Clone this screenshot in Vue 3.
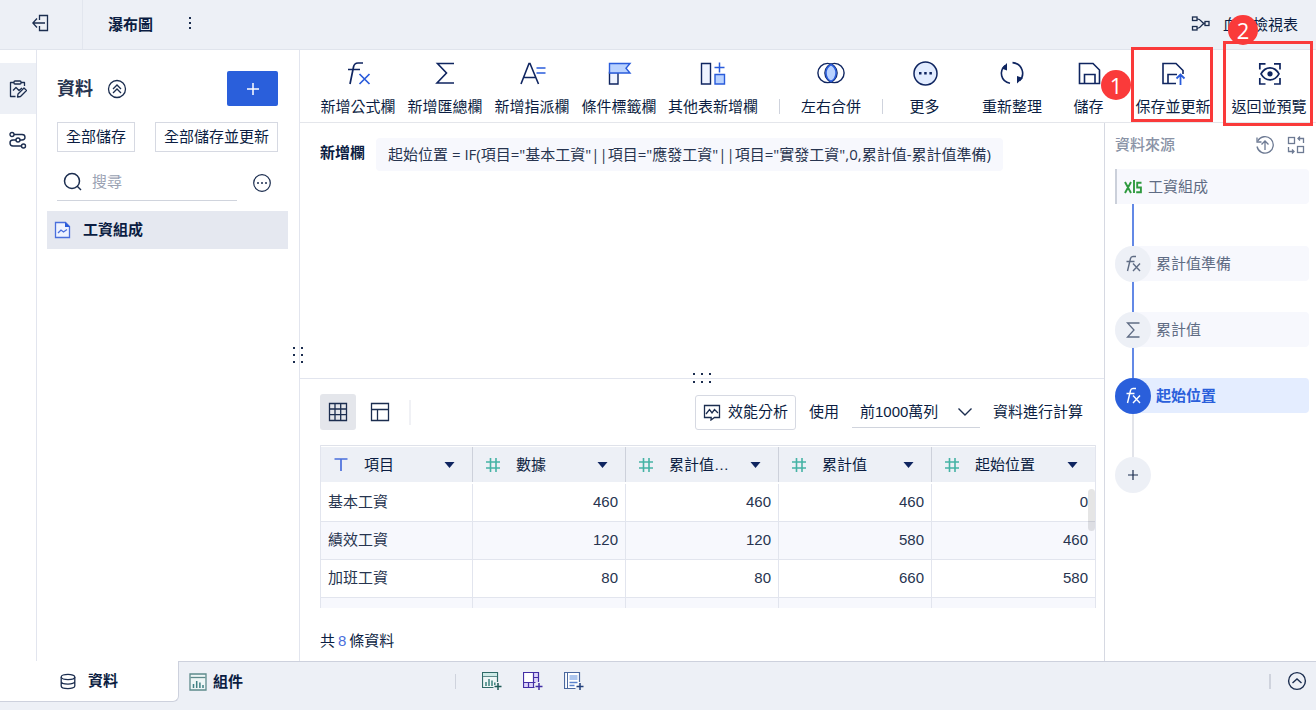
<script setup>
import { h, ref } from 'vue'

const N = '#0f2560'
const B = '#2a5cdb'
const D = '#1b2d4f'

const icons = {
  exit: `<g fill="none" stroke="${D}" stroke-width="1.3"><path d="M7.500 6V1.500h8v15h-8V12"/><path d="M13 9H1M5 4.500.8 9 5 13.500"/></g>`,
  dots: `<g fill="${D}"><rect x="3" y="2" width="2" height="2"/><rect x="3" y="7" width="2" height="2"/><rect x="3" y="12" width="2" height="2"/></g>`,
  lineage: `<g fill="none" stroke="${D}" stroke-width="1.3"><rect x="1.500" y="1" width="4.500" height="3.500"/><rect x="1.500" y="10.500" width="4.500" height="3.500"/><rect x="14" y="5.500" width="4" height="4"/><path d="M6 2.800c5 0 3.500 4.700 8 4.700M6 12.300c5 0 3.500-4.800 8-4.800"/></g>`,
  edit: `<g fill="none" stroke="${D}" stroke-width="1.3" stroke-linejoin="round"><path d="M5 2.500H1.500v14h5M12 2.500h3.500V6"/><rect x="5" y="1" width="7" height="3" rx="1"/><path d="M4 10.500l3-3 3 3 3-2.500"/><path d="M9 14l6-6 2.500 2.500-6 6L8.500 17z"/></g>`,
  flow: `<g fill="none" stroke="${D}" stroke-width="1.4"><circle cx="3" cy="3.500" r="2"/><circle cx="9" cy="9" r="2"/><circle cx="14.500" cy="15" r="2"/><path d="M5 3.500h8c4 0 4 5.500 0 5.500h-2M7 9H4c-4 0-4 6 0 6h8.500"/></g>`,
  collapse: `<g fill="none" stroke="${D}" stroke-width="1.3"><circle cx="10" cy="10" r="8.500"/><path d="M6 10l4-4 4 4M6 14l4-4 4 4"/></g>`,
  plus: `<path d="M8 2v12M2 8h12" fill="none" stroke="currentColor" stroke-width="1.500"/>`,
  plusSmall: `<path d="M8 3v10M3 8h10" fill="none" stroke="${D}" stroke-width="1.200"/>`,
  search: `<g fill="none" stroke="${D}" stroke-width="1.500"><circle cx="9" cy="9" r="7.500"/><path d="M14 14l4 4"/></g>`,
  ellipsis: `<circle cx="10" cy="10" r="8.300" fill="none" stroke="${D}" stroke-width="1.200"/><g fill="${D}"><circle cx="6" cy="10" r="1"/><circle cx="10" cy="10" r="1"/><circle cx="14" cy="10" r="1"/></g>`,
  file: `<path d="M1.500 1.500h10l4 4v11h-14z" fill="#eef3ff" stroke="#4a6fdc" stroke-width="1.300"/><path d="M11 1v5h5z" fill="${B}"/><path d="M4 12l3-3 2.500 2L13 8.500" fill="none" stroke="#4a6fdc" stroke-width="1.300"/>`,
  fx: `<path d="M6 25l3.500-17q.800-4 4.500-4h5M4 10.500h12" fill="none" stroke="${N}" stroke-width="1.700"/><path d="M15.500 15l10 10M25.500 15l-10 10" fill="none" stroke="${B}" stroke-width="1.700"/>`,
  sigma: `<path d="M23 4.500H6.500l9 9.500-9.500 10H23" fill="none" stroke="${N}" stroke-width="1.600"/>`,
  assign: `<path d="M3 25L11 4.500h1L20.500 25M6 18.500h12" fill="none" stroke="${N}" stroke-width="1.600"/><path d="M18.500 9h9M18.500 14h9" fill="none" stroke="${B}" stroke-width="1.600"/>`,
  flag: `<path d="M4.500 13.500h8.500V25H4.500z" fill="#eef3ff" stroke="${N}" stroke-width="1.400"/><path d="M4.500 4.500h20.500l-4 4.800 4 4.700H4.500z" fill="#b9d2ff" stroke="${B}" stroke-width="1.400"/>`,
  addTable: `<path d="M2.500 4.500h9v20.500h-9z" fill="#eef3ff" stroke="${N}" stroke-width="1.400"/><path d="M16 15.500h9.500V25H16z" fill="#b9d2ff" stroke="${B}" stroke-width="1.400"/><path d="M20.500 3.500v10M15.500 8.500h10" stroke="${B}" stroke-width="1.500"/>`,
  merge: `<path d="M14 5.500a9.700 9.700 0 0 1 0 17 9.700 9.700 0 0 1 0-17z" fill="#b9d2ff"/><g fill="none" stroke="${N}" stroke-width="1.400"><circle cx="10.500" cy="14" r="9.600"/><circle cx="17.500" cy="14" r="9.600"/></g><path d="M14 5.500a9.700 9.700 0 0 1 0 17 9.700 9.700 0 0 1 0-17z" fill="none" stroke="${B}" stroke-width="1.500"/>`,
  more: `<circle cx="14.500" cy="14.500" r="11.500" fill="#e2ecff" stroke="${N}" stroke-width="1.500"/><g fill="${N}"><rect x="8" y="13" width="2.500" height="2.500"/><rect x="13.200" y="13" width="2.500" height="2.500"/><rect x="18.400" y="13" width="2.500" height="2.500"/></g>`,
  refresh: `<g fill="none" stroke="${N}" stroke-width="1.600"><path d="M12 24.300C2.500 22.500 1 12 7 6.500"/><path d="M14.500 3.600c10 .9 13 12.400 7 18"/></g><path d="M9 4v7.500L3.500 9.500zM19 17v7.500l6-5.500z" fill="${N}"/>`,
  save: `<path d="M4.500 4.500H18l6.500 6.500v13.500h-20zM9.500 24.500v-9H20v9" fill="none" stroke="${N}" stroke-width="1.600"/>`,
  saveUpdate: `<path d="M17 24.500H4v-20h13l7 7V15M9 24.500v-9h9" fill="none" stroke="${N}" stroke-width="1.600"/><path d="M21.500 26V16M17.500 19.500l4-4 4 4" fill="none" stroke="${B}" stroke-width="1.800"/>`,
  preview: `<g fill="none" stroke="${N}" stroke-width="1.700"><path d="M4.800 10.500V4.800h5.700M19 4.800h6v5.700M25 19v6h-6M10.500 25H4.800v-6"/><path d="M6 14.900c4.500-8 13.500-8 18 0-4.500 8-13.500 8-18 0z"/></g><circle cx="15" cy="14.800" r="2.600" fill="${N}"/>`,
  grid: `<path d="M1.500 1.500h17v17h-17zM1.500 7h17M1.500 12.700h17M7 1.500v17M12.700 1.500v17" fill="none" stroke="${D}" stroke-width="1.300"/>`,
  layout: `<path d="M1.500 1.500h17v17h-17zM1.500 7.500h17M7.500 7.500v11" fill="none" stroke="${D}" stroke-width="1.300"/>`,
  perf: `<path d="M1.500 2.500h15v12h-5L8 17l.2-2.500H1.500z" fill="none" stroke="${D}" stroke-width="1.300"/><path d="M3 11l3.500-4.500L9 10l2.500-3.500L15 10" fill="none" stroke="${D}" stroke-width="1.300"/>`,
  chevron: `<path d="M1.500 1.500L8 8l6.500-6.500" fill="none" stroke="${D}" stroke-width="1.400"/>`,
  text: `<path d="M1.500 2h13M8 2v12" fill="none" stroke="#4a6fdc" stroke-width="1.700"/>`,
  hash: `<path d="M1 5h14M1 11h14M5.500 1v14M11 1v14" fill="none" stroke="#45b3a5" stroke-width="1.600"/>`,
  caret: `<path d="M.5 1h10L5.500 7z" fill="${N}"/>`,
  upload: `<g fill="none" stroke="#6d7a93" stroke-width="1.300"><path d="M2.800 6A8.200 8.200 0 1 1 2 11.500"/><path d="M2 2.500V7h4.500M10 15V6M6.500 9.500L10 6l3.500 3.500"/></g>`,
  swap: `<g fill="none" stroke="#6d7a93" stroke-width="1.300"><rect x="2.500" y="2.500" width="6" height="6"/><rect x="11.500" y="11.500" width="6" height="6"/><path d="M12 3.500h5.500V8M14 1.500l-2 2 2 2M2.500 12v4.500H8M6 14.500l2 2-2 2"/></g>`,
  nodeFx: `<path d="M4.500 17l3-12.500Q8 2.500 10 2.500h3M3.500 7.500h8M10 9.500l7 7.500M17 9.500l-7 7.500" fill="none" stroke="currentColor" stroke-width="1.400"/>`,
  nodeSigma: `<path d="M16.500 3H4.500l6.500 7-6.500 7H16.500" fill="none" stroke="currentColor" stroke-width="1.300"/>`,
  xls: `<g fill="none" stroke="#2f9a3f" stroke-width="1.900"><path d="M1 3l6 11M7 3L1 14M10 1v13M17.500 3.800h-4.300v4.700h3.700v4.700h-4.700"/></g>`,
  db: `<g fill="none" stroke="${D}" stroke-width="1.300"><ellipse cx="8" cy="4" rx="6.800" ry="2.600"/><path d="M1.200 4v9c0 3.500 13.600 3.500 13.600 0V4M1.200 8.500c0 3.500 13.600 3.500 13.600 0"/></g>`,
  chart: `<path d="M1 1h16v16H1z" fill="#eef6f6" stroke="#5e8a8c" stroke-width="1.300"/><path d="M1.500 4.500h15" stroke="#5e8a8c" stroke-width="1.300"/><path d="M4.500 15v-4M7.700 15V8M10.900 15V9.500M14 15v-3" stroke="#3f8083" stroke-width="1.500"/>`,
  addChart: `<path d="M15.500 11V1.500h-15v15h11" fill="#eef6f6" stroke="#2f6a68" stroke-width="1.200"/><path d="M1 2h14v3H1z" fill="#cdeae6"/><path d="M1 5.500h14" stroke="#5e8a8c"/><path d="M4 15v-4M7 15V8M10 15V9.500M12.800 14v-2.500" stroke="#2f7a76" stroke-width="1.400"/><path d="M16 12v7M12.500 15.500h7" stroke="#1f5a56" stroke-width="1.500"/>`,
  addBoard: `<path d="M.5 1.500h15v10h-5v5H.5z" fill="#ddd4fb"/><path d="M1 2h9.500v9.500H1z" fill="#fff"/><path d="M15.500 11V1.500H.5v15h11M.5 11.500h12M10.500 1.500v15M5.500 11.500v5M10.500 6.500h5" fill="none" stroke="#432fa5" stroke-width="1.200"/><path d="M16 12v7M12.500 15.500h7" stroke="#432fa5" stroke-width="1.500"/>`,
  addReport: `<path d="M15.500 11V1.500h-15v16h11" fill="#fff" stroke="#4a689f" stroke-width="1.200"/><path d="M3.500 1.500v16" stroke="#4a689f"/><path d="M5.500 4h8v5h-8z" fill="#adc6ee"/><path d="M5.500 11.500h8M5.500 14.500h5" stroke="#5a82cc" stroke-width="1.300"/><path d="M16 12v7M12.500 15.500h7" stroke="#23407c" stroke-width="1.500"/>`,
  up: `<g fill="none" stroke="${D}" stroke-width="1.400"><circle cx="10" cy="10" r="8.400"/><path d="M5.500 12l4.500-4 4.500 4"/></g>`,
}

const Icon = (props) =>
  h('svg', {
    width: props.w,
    height: props.t || props.w,
    viewBox: `0 0 ${props.w} ${props.t || props.w}`,
    'aria-hidden': 'true',
    innerHTML: icons[props.name],
  })
Icon.props = ['name', 'w', 't']

const columnTools = [
  { icon: 'fx', label: '新增公式欄' },
  { icon: 'sigma', label: '新增匯總欄' },
  { icon: 'assign', label: '新增指派欄' },
  { icon: 'flag', label: '條件標籤欄' },
  { icon: 'addTable', label: '其他表新增欄' },
]
const saveTools = [
  { icon: 'refresh', label: '重新整理' },
  { icon: 'save', label: '儲存' },
  { icon: 'saveUpdate', label: '保存並更新', mark: 1 },
  { icon: 'preview', label: '返回並預覽', mark: 2 },
]
const columns = [
  { icon: 'text', name: '項目' },
  { icon: 'hash', name: '數據' },
  { icon: 'hash', name: '累計值…' },
  { icon: 'hash', name: '累計值' },
  { icon: 'hash', name: '起始位置' },
]
const rows = [
  ['基本工資', 460, 460, 460, 0],
  ['績效工資', 120, 120, 580, 460],
  ['加班工資', 80, 80, 660, 580],
  ['', '', '', '', ''],
]
const steps = [
  { icon: 'nodeFx', label: '累計值準備' },
  { icon: 'nodeSigma', label: '累計值' },
  { icon: 'nodeFx', label: '起始位置', active: true },
]
const keyword = ref('')
const limit = ref('1000')
</script>

<template>
  <div class="app">
    <header class="top">
      <button class="exit" aria-label="返回"><Icon name="exit" w="18" /></button>
      <h1>瀑布圖</h1>
      <button class="plain" aria-label="更多操作"><Icon name="dots" w="8" t="16" /></button>
      <button class="lineage"><Icon name="lineage" w="20" t="17" /><span>血緣檢視表</span></button>
    </header>

    <main class="body">
      <nav class="rail">
        <button class="on" aria-label="編輯"><Icon name="edit" w="18" /></button>
        <button aria-label="流程"><Icon name="flow" w="18" /></button>
      </nav>

      <aside class="side">
        <div class="side-head">
          <h2>資料</h2>
          <button class="plain" aria-label="收起"><Icon name="collapse" w="20" /></button>
          <button class="add" aria-label="新增"><Icon name="plus" w="16" /></button>
        </div>
        <div class="side-actions">
          <button>全部儲存</button>
          <button>全部儲存並更新</button>
        </div>
        <div class="search-row">
          <label class="search">
            <Icon name="search" w="20" />
            <input v-model="keyword" type="text" placeholder="搜尋" aria-label="搜尋" />
          </label>
          <button class="plain" aria-label="更多"><Icon name="ellipsis" w="20" /></button>
        </div>
        <a class="file" href="#"><Icon name="file" w="17" t="18" />工資組成</a>
        <span class="grip grip-v"><i v-for="n in 6" :key="n"></i></span>
      </aside>

      <section class="work">
        <div class="toolbar">
          <div class="tools">
            <button v-for="t in columnTools" :key="t.label" class="tool">
              <Icon :name="t.icon" w="28" /><span>{{ t.label }}</span>
            </button>
          </div>
          <i class="sep"></i>
          <button class="tool"><Icon name="merge" w="28" /><span>左右合併</span></button>
          <i class="sep after-merge"></i>
          <button class="tool narrow"><Icon name="more" w="28" /><span>更多</span></button>
          <div class="save-tools">
            <button
              v-for="t in saveTools"
              :key="t.label"
              class="tool"
              :class="t.mark ? ['marked', 'marked-' + t.mark] : 'short'"
            >
              <Icon :name="t.icon" w="28" /><span>{{ t.label }}</span>
              <b v-if="t.mark" class="badge">{{ t.mark }}</b>
            </button>
          </div>
        </div>

        <div class="panes">
          <div class="center">
            <div class="formula">
              <h3>新增欄</h3>
              <p>起始位置 = IF(項目="基本工資"||項目="應發工資"||項目="實發工資",0,累計值-累計值準備)</p>
            </div>
            <div class="data">
              <span class="grip grip-h"><i v-for="n in 6" :key="n"></i></span>
              <div class="data-bar">
                <div class="views">
                  <button class="view on" aria-label="表格"><Icon name="grid" w="20" /></button>
                  <button class="view" aria-label="版面"><Icon name="layout" w="20" /></button>
                </div>
                <button class="perf"><Icon name="perf" w="18" />效能分析</button>
                <label for="limit">使用</label>
                <span class="select">
                  <select id="limit" v-model="limit">
                    <option value="1000">前1000萬列</option>
                  </select>
                  <Icon name="chevron" w="16" t="10" />
                </span>
                <span>資料進行計算</span>
              </div>
              <div class="table-wrap">
                <table>
                  <colgroup>
                    <col v-for="n in 4" :key="n" class="fixed" />
                    <col />
                  </colgroup>
                  <thead>
                    <tr>
                      <th v-for="c in columns" :key="c.name">
                        <div>
                          <Icon :name="c.icon" w="16" />
                          <span>{{ c.name }}</span>
                          <Icon name="caret" w="11" t="8" />
                        </div>
                      </th>
                    </tr>
                  </thead>
                  <tbody>
                    <tr v-for="(r, i) in rows" :key="i">
                      <td v-for="(v, j) in r" :key="j">{{ v }}</td>
                    </tr>
                  </tbody>
                </table>
                <i class="thumb"></i>
              </div>
              <p class="count"><span>共</span><em>8</em><span>條資料</span></p>
            </div>
          </div>

          <aside class="source">
            <div class="source-head">
              <h3>資料來源</h3>
              <button class="plain" aria-label="更新來源"><Icon name="upload" w="20" /></button>
              <button class="plain" aria-label="替換來源"><Icon name="swap" w="20" /></button>
            </div>
            <button class="origin"><Icon name="xls" w="19" t="16" />工資組成</button>
            <i class="link first"></i>
            <template v-for="(s, i) in steps" :key="s.label">
              <i v-if="i" class="link"></i>
              <button class="step" :class="{ active: s.active }">
                <span class="dot"><Icon :name="s.icon" w="20" /></span>{{ s.label }}
              </button>
            </template>
            <i class="link last"></i>
            <button class="dot" aria-label="新增步驟"><Icon name="plusSmall" w="16" /></button>
          </aside>
        </div>
      </section>
    </main>

    <footer class="bottom">
      <button class="tab current"><Icon name="db" w="16" t="17" />資料</button>
      <button class="tab"><Icon name="chart" w="18" />組件</button>
      <i class="sep foot-sep"></i>
      <button class="plain" aria-label="新增組件"><Icon name="addChart" w="20" /></button>
      <button class="plain" aria-label="新增儀表板"><Icon name="addBoard" w="20" /></button>
      <button class="plain" aria-label="新增報告"><Icon name="addReport" w="20" /></button>
      <i class="sep end-sep"></i>
      <button class="plain" aria-label="展開"><Icon name="up" w="20" /></button>
    </footer>
  </div>
</template>

<style>
body {
  margin: 0;
}
</style>

<style scoped>
.app,
.app * {
  box-sizing: border-box;
}
.app {
  display: flex;
  flex-direction: column;
  height: 100vh;
  overflow: hidden;
  background: #fff;
  color: #0b1d42;
  font: 15px/20px "Liberation Sans", "Noto Sans CJK TC", sans-serif;
}
h1,
h2,
h3,
p {
  margin: 0;
  font-size: 15px;
}
svg {
  display: block;
  flex: none;
}
button,
input,
select {
  padding: 0;
  border: 0;
  background: none;
  color: inherit;
  font: inherit;
  white-space: nowrap;
}
.plain {
  display: flex;
}

.top {
  display: flex;
  align-items: center;
  height: 50px;
  flex: none;
  padding-right: 18px;
  background: #edf0f6;
  border-bottom: 1px solid #e0e4ec;
}
.exit {
  display: flex;
  align-items: center;
  width: 83px;
  height: 49px;
  padding: 0 0 4px 32px;
  border-right: 1px solid #e2e6ee;
}
.top h1 {
  margin: 0 33px 0 25px;
}
.top > .plain {
  padding-bottom: 4px;
}
.lineage {
  display: flex;
  align-items: center;
  gap: 12px;
  margin-left: auto;
}

.body {
  display: flex;
  flex: 1;
  min-height: 0;
}
.rail {
  width: 37px;
  flex: none;
  padding-top: 13px;
  border-right: 1px solid #e2e5ee;
}
.rail button {
  display: flex;
  align-items: center;
  justify-content: center;
  width: 100%;
  height: 51px;
}
.rail .on {
  background: #edf0f6;
}

.side {
  position: relative;
  width: 263px;
  flex: none;
  padding: 21px 11px 0 10px;
  border-right: 1px solid #e2e5ee;
}
.side-head,
.side-actions,
.search-row {
  display: flex;
  padding: 0 10px;
}
.side-head {
  align-items: center;
}
.side h2 {
  margin-right: 14px;
  color: #27344f;
  font-size: 18px;
}
.add {
  display: flex;
  align-items: center;
  justify-content: center;
  width: 51px;
  height: 35px;
  margin-left: auto;
  border-radius: 2px;
  background: #2a5fdb;
  color: #fff;
}
.side-actions {
  justify-content: space-between;
  margin: 16px 0 12px;
}
.side-actions button {
  height: 30px;
  padding: 0 8px;
  border: 1px solid #d6d9e2;
}
.search-row {
  align-items: center;
  gap: 15px;
}
.search {
  display: flex;
  align-items: center;
  gap: 9px;
  width: 180px;
  height: 37px;
  padding-left: 6px;
  border-bottom: 1px solid #d0d4dd;
}
.search input {
  width: 100%;
  min-width: 0;
  outline: 0;
}
.search input::placeholder {
  color: #9aa2b3;
}
.file {
  display: flex;
  align-items: center;
  gap: 12px;
  height: 38px;
  margin-top: 10px;
  padding-left: 7px;
  background: #e5e8f0;
  color: inherit;
  font-weight: 600;
  text-decoration: none;
}

.grip {
  position: absolute;
  display: grid;
  gap: 5px 6px;
}
.grip i {
  width: 2px;
  height: 2px;
  background: #1b2d4f;
}
.grip-v {
  top: 297px;
  right: -4px;
  grid-template-columns: 2px 2px;
}
.grip-h {
  top: -6px;
  left: 50%;
  grid-template-columns: 2px 2px 2px;
  row-gap: 6px;
  translate: -50% 0;
}

.work {
  display: flex;
  flex: 1;
  flex-direction: column;
  min-width: 0;
}
.toolbar {
  display: flex;
  align-items: flex-start;
  height: 73px;
  flex: none;
  padding: 9px 9px 0 20px;
  border-bottom: 1px solid #e4e6eb;
}
.tools {
  display: flex;
  gap: 11px;
}
.tool {
  position: relative;
  display: flex;
  flex-direction: column;
  align-items: center;
  gap: 10px;
  min-width: 76px;
}
.tool.short,
.tool.narrow {
  min-width: 31px;
}
.sep {
  width: 1px;
  height: 15px;
  flex: none;
  background: #cfd3dd;
}
.toolbar .sep {
  margin: 40px 13px 0 21px;
}
.toolbar .after-merge {
  margin: 40px 26px 0 13px;
}
.save-tools {
  display: flex;
  gap: 31px;
  margin-left: auto;
}
.marked-2 {
  margin-left: -11px;
}
.marked::after {
  content: "";
  position: absolute;
  inset: -12px -2px -5px -4px;
  border: 3px solid #fa3a3a;
}
.marked-2::after {
  inset: -18px -6px -9px -8px;
}
.badge {
  position: absolute;
  z-index: 1;
  top: 11px;
  left: -34px;
  width: 30px;
  height: 30px;
  border-radius: 50%;
  background: #fa3a3a;
  color: #fff;
  font: 22px/30px "Open Sans", sans-serif;
  text-align: center;
}
.marked-2 .badge {
  top: -44px;
  left: -3px;
}

.panes {
  display: flex;
  flex: 1;
  min-height: 0;
}
.center {
  display: flex;
  flex: 1;
  flex-direction: column;
  min-width: 0;
}
.formula {
  display: flex;
  flex: 1;
  align-items: flex-start;
  gap: 11px;
  padding: 15px 20px 0;
}
.formula h3 {
  line-height: 30px;
}
.formula p {
  padding: 0 12px;
  border-radius: 4px;
  background: #f7f8fd;
  color: #27344f;
  font-family: "Open Sans", "Noto Sans CJK TC", sans-serif;
  line-height: 33px;
}
.data {
  position: relative;
  flex: none;
  padding: 15px 8px 10px 20px;
  border-top: 1px solid #e2e5ee;
}
.data-bar {
  display: flex;
  align-items: center;
  gap: 13px;
  height: 36px;
  margin-bottom: 15px;
  padding-right: 13px;
}
.views {
  display: flex;
  align-items: center;
  gap: 6px;
  height: 25px;
  padding-right: 11px;
  border-right: 2px solid #f0f1f5;
}
.view {
  display: flex;
  align-items: center;
  justify-content: center;
  width: 36px;
  height: 36px;
  border-radius: 3px;
}
.view.on {
  background: #e4e6eb;
}
.perf {
  display: flex;
  align-items: center;
  gap: 7px;
  height: 35px;
  margin-left: auto;
  padding: 0 7px;
  border: 1px solid #d6d9e2;
  border-radius: 3px;
}
.select {
  display: flex;
  align-items: center;
  width: 128px;
  height: 32px;
  padding: 0 7px 0 8px;
  border-bottom: 1px solid #d0d4dd;
}
.select select {
  flex: 1;
  min-width: 0;
  appearance: none;
  outline: 0;
}

.table-wrap {
  position: relative;
  height: 163px;
  overflow: hidden;
  border-right: 1px solid #e2e5ee;
  border-left: 1px solid #e2e5ee;
}
table {
  width: 100%;
  border-collapse: separate;
  border-spacing: 0;
  table-layout: fixed;
}
.fixed {
  width: 153px;
}
.fixed:first-child {
  width: 152px;
}
th {
  height: 39px;
  padding: 1px 0;
  border-top: 1px solid #dfe2ea;
  font-weight: 400;
  vertical-align: top;
}
th div {
  display: flex;
  align-items: center;
  height: 35px;
  padding: 0 17px 0 12px;
  border-right: 1px solid #cdd1db;
  background: #edf0f6;
}
th:last-child div {
  border-right: 0;
}
th span {
  margin: 0 auto 0 15px;
  white-space: nowrap;
}
td {
  height: 38px;
  padding: 0 7px 2px;
  border-right: 1px solid #e2e5ee;
  border-bottom: 1px solid #e2e5ee;
  color: #27344f;
  text-align: right;
}
td:first-child {
  text-align: left;
}
td:last-child {
  border-right: 0;
}
tr:nth-child(even) td {
  background: #f7f8fd;
}
.thumb {
  position: absolute;
  top: 44px;
  right: 0;
  width: 7px;
  height: 42px;
  border-radius: 4px;
  background: rgba(0, 0, 0, 0.1);
}
.count {
  display: flex;
  gap: 3px;
  margin-top: 23px;
}
.count em {
  color: #4a6fdc;
  font-style: normal;
}

.source {
  width: 212px;
  flex: none;
  padding: 12px 7px 0 10px;
  border-left: 1px solid #d6d9e2;
  color: #5f6c84;
}
.source-head {
  display: flex;
  align-items: center;
  gap: 11px;
  margin-bottom: 14px;
  padding-right: 3px;
}
.source h3 {
  flex: 1;
  color: #8a93a6;
  font-weight: 500;
}
.origin {
  display: flex;
  align-items: center;
  gap: 5px;
  width: 100%;
  height: 35px;
  padding-left: 7px;
  border-left: 2px solid #cbd0da;
  border-radius: 0 4px 4px 0;
  background: #f7f8fd;
}
.link {
  display: block;
  width: 2px;
  height: 31px;
  margin-left: 17px;
  background: #6389e6;
}
.link.first {
  height: 42px;
}
.link.last {
  height: 44px;
  background: #e2e4ea;
}
.step {
  display: flex;
  align-items: center;
  gap: 5px;
  width: 100%;
  height: 35px;
  border-radius: 18px 4px 4px 18px;
  background: #f7f8fd;
}
.dot {
  display: flex;
  align-items: center;
  justify-content: center;
  width: 36px;
  height: 36px;
  border-radius: 50%;
  background: #edf0f6;
}
.step.active {
  background: #e4edff;
  color: #2a5fdb;
  font-weight: 600;
}
.active .dot {
  background: #2a5fdb;
  color: #fff;
}

.bottom {
  display: flex;
  align-items: flex-start;
  height: 49px;
  flex: none;
  padding-right: 9px;
  background: #edf0f6;
  box-shadow: inset 0 1px #cdd1dd;
}
.tab {
  display: flex;
  align-items: center;
  gap: 6px;
  height: 41px;
  padding-left: 10px;
  font-weight: 600;
}
.tab.current {
  gap: 12px;
  width: 179px;
  padding-left: 60px;
  border: solid #cdd1dd;
  border-width: 0 1px 1px 0;
  border-radius: 0 0 6px 0;
  background: #fff;
}
.bottom .plain {
  margin: 10px 0 0 21px;
}
.bottom .foot-sep {
  margin: 13px 5px 0 212px;
}
.bottom .end-sep {
  width: 2px;
  margin: 13px -5px 0 auto;
}
</style>
